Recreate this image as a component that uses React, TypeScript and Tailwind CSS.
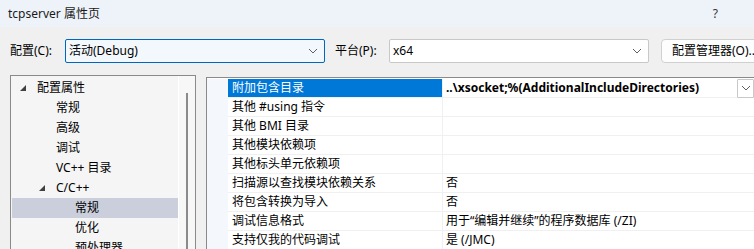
import React from "react";

const font = "font-['Segoe_UI','Noto_Sans','Noto_Sans_CJK_SC',sans-serif]";

const Chevron = ({ className = "" }: { className?: string }) => (
	<svg width="10" height="6" viewBox="0 0 10 6" className={className}>
		<path d="M1 1l4 4 4-4" fill="none" stroke="#606060" strokeWidth="1" />
	</svg>
);

const Tri = () => (
	<svg width="6" height="6" viewBox="0 0 6 6">
		<path d="M6 0L6 6L0 6Z" fill="#404040" />
	</svg>
);

const treeItems: { label: string; level: number; open?: boolean; selected?: boolean }[] = [
	{ label: "配置属性", level: 0, open: true },
	{ label: "常规", level: 1 },
	{ label: "高级", level: 1 },
	{ label: "调试", level: 1 },
	{ label: "VC++ 目录", level: 1 },
	{ label: "C/C++", level: 1, open: true },
	{ label: "常规", level: 2, selected: true },
	{ label: "优化", level: 2 },
	{ label: "预处理器", level: 2 },
];

const rows: { name: string; value: string; selected?: boolean }[] = [
	{ name: "附加包含目录", value: "..\\xsocket;%(AdditionalIncludeDirectories)", selected: true },
	{ name: "其他 #using 指令", value: "" },
	{ name: "其他 BMI 目录", value: "" },
	{ name: "其他模块依赖项", value: "" },
	{ name: "其他标头单元依赖项", value: "" },
	{ name: "扫描源以查找模块依赖关系", value: "否" },
	{ name: "将包含转换为导入", value: "否" },
	{ name: "调试信息格式", value: "用于“编辑并继续”的程序数据库 (/ZI)" },
	{ name: "支持仅我的代码调试", value: "是 (/JMC)" },
];

const indent = ["pl-[8px]", "pl-[27px]", "pl-[46px]"];

export default function App() {
	return (
		<div className={`w-[754px] h-[249px] overflow-hidden bg-[#f0f0f0] text-[12px] text-black ${font}`}>
			{/* title */}
			<div className="h-[27px] bg-[#eef3f9] flex items-center pl-[8px] pr-[36px]">
				<span className="flex-1 text-[12px] text-[#1a1a1a]">tcpserver 属性页</span>
				<span className="text-[12px] text-[#333]">?</span>
			</div>

			{/* config row */}
			<div className="flex items-center mt-[12px] h-[24px]">
				<span className="w-[65px] shrink-0 pl-[10px]">配置(C):</span>
				<div className="w-[260px] shrink-0 h-[24px] border border-[#0067c0] bg-[#f3f8fd] rounded-[2px] flex items-center pl-[3px] pr-[6px]">
					<span className="flex-1">活动(Debug)</span>
					<Chevron />
				</div>
				<span className="w-[64px] shrink-0 pl-[10px]">平台(P):</span>
				<div className="w-[260px] shrink-0 h-[24px] border border-[#c8c8c8] bg-white rounded-[2px] flex items-center pl-[3px] pr-[6px]">
					<span className="flex-1">x64</span>
					<Chevron />
				</div>
				<div className="ml-[12px] h-[24px] w-[110px] shrink-0 border border-[#d0d0d0] bg-[#fdfdfd] rounded-[4px] flex items-center pl-[10px] whitespace-nowrap">
					配置管理器(O)...
				</div>
			</div>

			{/* panels */}
			<div className="flex mt-[12px] pl-[10px]">
				{/* tree */}
				<div className="w-[186px] h-[200px] shrink-0 border border-[#8a8a8a] bg-[#f5f5f5] flex">
					<div className="flex-1 pt-[2px] pl-[1px]">
						{treeItems.map((t, i) => (
							<div
								key={i}
								className={`h-[20px] flex items-center ${indent[t.level]} ${t.selected ? "bg-[#cbcfdc]" : ""}`}
							>
								<span className="w-[17px] flex items-center">{t.open ? <Tri /> : null}</span>
								<span className="whitespace-nowrap">{t.label}</span>
							</div>
						))}
					</div>
					<div className="w-[17px] border-l border-white bg-[#f7f7f7] flex justify-center pt-[17px]">
						<div className="w-[2px] h-[200px] bg-[#8a8a8a]" />
					</div>
				</div>

				{/* property grid */}
				<div className="ml-[10px] mt-[2px] flex-1 h-[200px] border-t border-l border-[#8a8a8a] bg-white flex pt-[1px]">
					<div className="w-[21px] shrink-0 bg-[#f4f7fc]" />
					<div className="flex-1">
						{rows.map((r, i) => (
							<div key={i} className="h-[19px] flex border-b border-[#f0f0f0]">
								<div
									className={`w-[214px] shrink-0 flex items-center pl-[4px] whitespace-nowrap ${
										r.selected ? "bg-[#0078d7] text-white" : ""
									}`}
								>
									{r.name}
								</div>
								<div className="w-[1px] bg-[#f0f0f0]" />
								<div className={`flex-1 flex items-center pl-[3px] whitespace-nowrap ${r.selected ? "font-bold" : ""}`}>
									<span className="flex-1">{r.value}</span>
									{r.selected ? (
										<div className="w-[17px] h-[19px] border border-[#c8c8c8] bg-white flex items-center justify-center rounded-[1px]">
											<Chevron />
										</div>
									) : null}
								</div>
							</div>
						))}
					</div>
				</div>
			</div>
		</div>
	);
}
